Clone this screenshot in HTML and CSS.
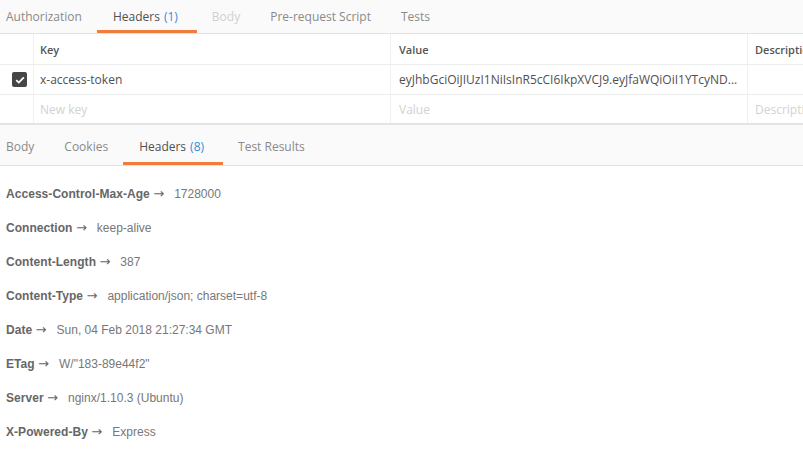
FILE: index.html
```html
<!DOCTYPE html>
<html>
<head>
<meta charset="utf-8">
<link rel="stylesheet" href="styles.css">
</head>
<body>
<div class="tabs req-tabs">
  <div class="tab">Authorization</div>
  <div class="tab active">Headers <span class="count">(1)</span></div>
  <div class="tab disabled">Body</div>
  <div class="tab">Pre-request Script</div>
  <div class="tab">Tests</div>
</div>
<div class="kv">
  <div class="row head">
    <div class="cell chk"></div>
    <div class="cell key">Key</div>
    <div class="cell val">Value</div>
    <div class="cell desc">Description</div>
  </div>
  <div class="row">
    <div class="cell chk"><span class="box"><svg width="10" height="8" viewBox="0 0 10 8"><path d="M1.2 4.2 L3.8 6.6 L8.8 1.4" fill="none" stroke="#fff" stroke-width="1.8"/></svg></span></div>
    <div class="cell key">x-access-token</div>
    <div class="cell val">eyJhbGciOiJIUzI1NiIsInR5cCI6IkpXVCJ9.eyJfaWQiOiI1YTcyND...</div>
    <div class="cell desc"></div>
  </div>
  <div class="row ph">
    <div class="cell chk"></div>
    <div class="cell key">New key</div>
    <div class="cell val">Value</div>
    <div class="cell desc">Description</div>
  </div>
</div>
<div class="tabs res-tabs">
  <div class="tab">Body</div>
  <div class="tab">Cookies</div>
  <div class="tab active">Headers <span class="count">(8)</span></div>
  <div class="tab">Test Results</div>
</div>
<div class="hdrs">
  <div class="h"><b>Access-Control-Max-Age <i>→</i></b><span>1728000</span></div>
  <div class="h"><b>Connection <i>→</i></b><span>keep-alive</span></div>
  <div class="h"><b>Content-Length <i>→</i></b><span>387</span></div>
  <div class="h"><b>Content-Type <i>→</i></b><span>application/json; charset=utf-8</span></div>
  <div class="h"><b>Date <i>→</i></b><span>Sun, 04 Feb 2018 21:27:34 GMT</span></div>
  <div class="h"><b>ETag <i>→</i></b><span>W/"183-89e44f2"</span></div>
  <div class="h"><b>Server <i>→</i></b><span>nginx/1.10.3 (Ubuntu)</span></div>
  <div class="h"><b>X-Powered-By <i>→</i></b><span>Express</span></div>
</div>
</body>
</html>
```
FILE: styles.css
```css
* { box-sizing: border-box; }
html, body { margin: 0; padding: 0; background: #fff; overflow: hidden; }
body { width: 803px; height: 457px; font-family: "Open Sans", sans-serif; }

.tabs {
  display: flex;
  background: #fafafa;
  border-bottom: 1px solid #e2e2e2;
}
.req-tabs { height: 34px; }
.res-tabs { height: 41px; padding-top: 3px; }
.tab {
  font-size: 12px;
  color: #8a8a8a;
  padding: 0 15px;
  display: flex;
  align-items: center;
  position: relative;
  white-space: nowrap;
}
.tabs .tab:first-child { padding-left: 6px; }
.tabs .tab.active { padding: 0 19px 0 16px; }
.tab.active { color: #505050; }
.tab.active::after {
  content: "";
  position: absolute;
  left: 0; right: 0; bottom: 0;
  height: 3px;
  background: #f07e3a;
}
.tab.disabled { color: #d0d0d0; }
.count { color: #2f8fdc; margin-left: 4px; }

.kv { background: #fff; }
.row { display: flex; height: 30px; border-bottom: 1px solid #ececec; }
.row.head { height: 31px; }
.kv .row:last-child { border-bottom: 2px solid #e4e4e4; }
.cell {
  display: flex;
  align-items: center;
  font-size: 12px;
  color: #505050;
  white-space: nowrap;
  overflow: hidden;
  border-right: 1px solid #f0f0f0;
}
.cell.chk { width: 34px; justify-content: center; }
.cell.key { width: 357px; padding-left: 6px; }
.cell.val { width: 357px; padding-left: 8px; }
.cell.desc { flex: 1; padding-left: 7px; border-right: none; }
.row.head .cell { font-size: 11px; font-weight: 600; color: #555; }
.row.ph .cell { color: #d2d2d2; }
.box {
  width: 15px; height: 15px;
  background: #464646;
  border-radius: 2px;
  display: flex; align-items: center; justify-content: center;
  margin-left: 6px;
}

.hdrs { padding: 11px 0 0 6px; font-family: "Liberation Sans", Arial, sans-serif; font-size: 12px; }
.h { height: 34px; display: flex; align-items: center; color: #777; }
.h b { color: #666; font-weight: bold; margin-right: 10px; letter-spacing: 0.05px; }
.h i { font-style: normal; font-weight: normal; font-family: "DejaVu Sans", sans-serif; font-size: 13px; color: #666; line-height: 12px; }
```
